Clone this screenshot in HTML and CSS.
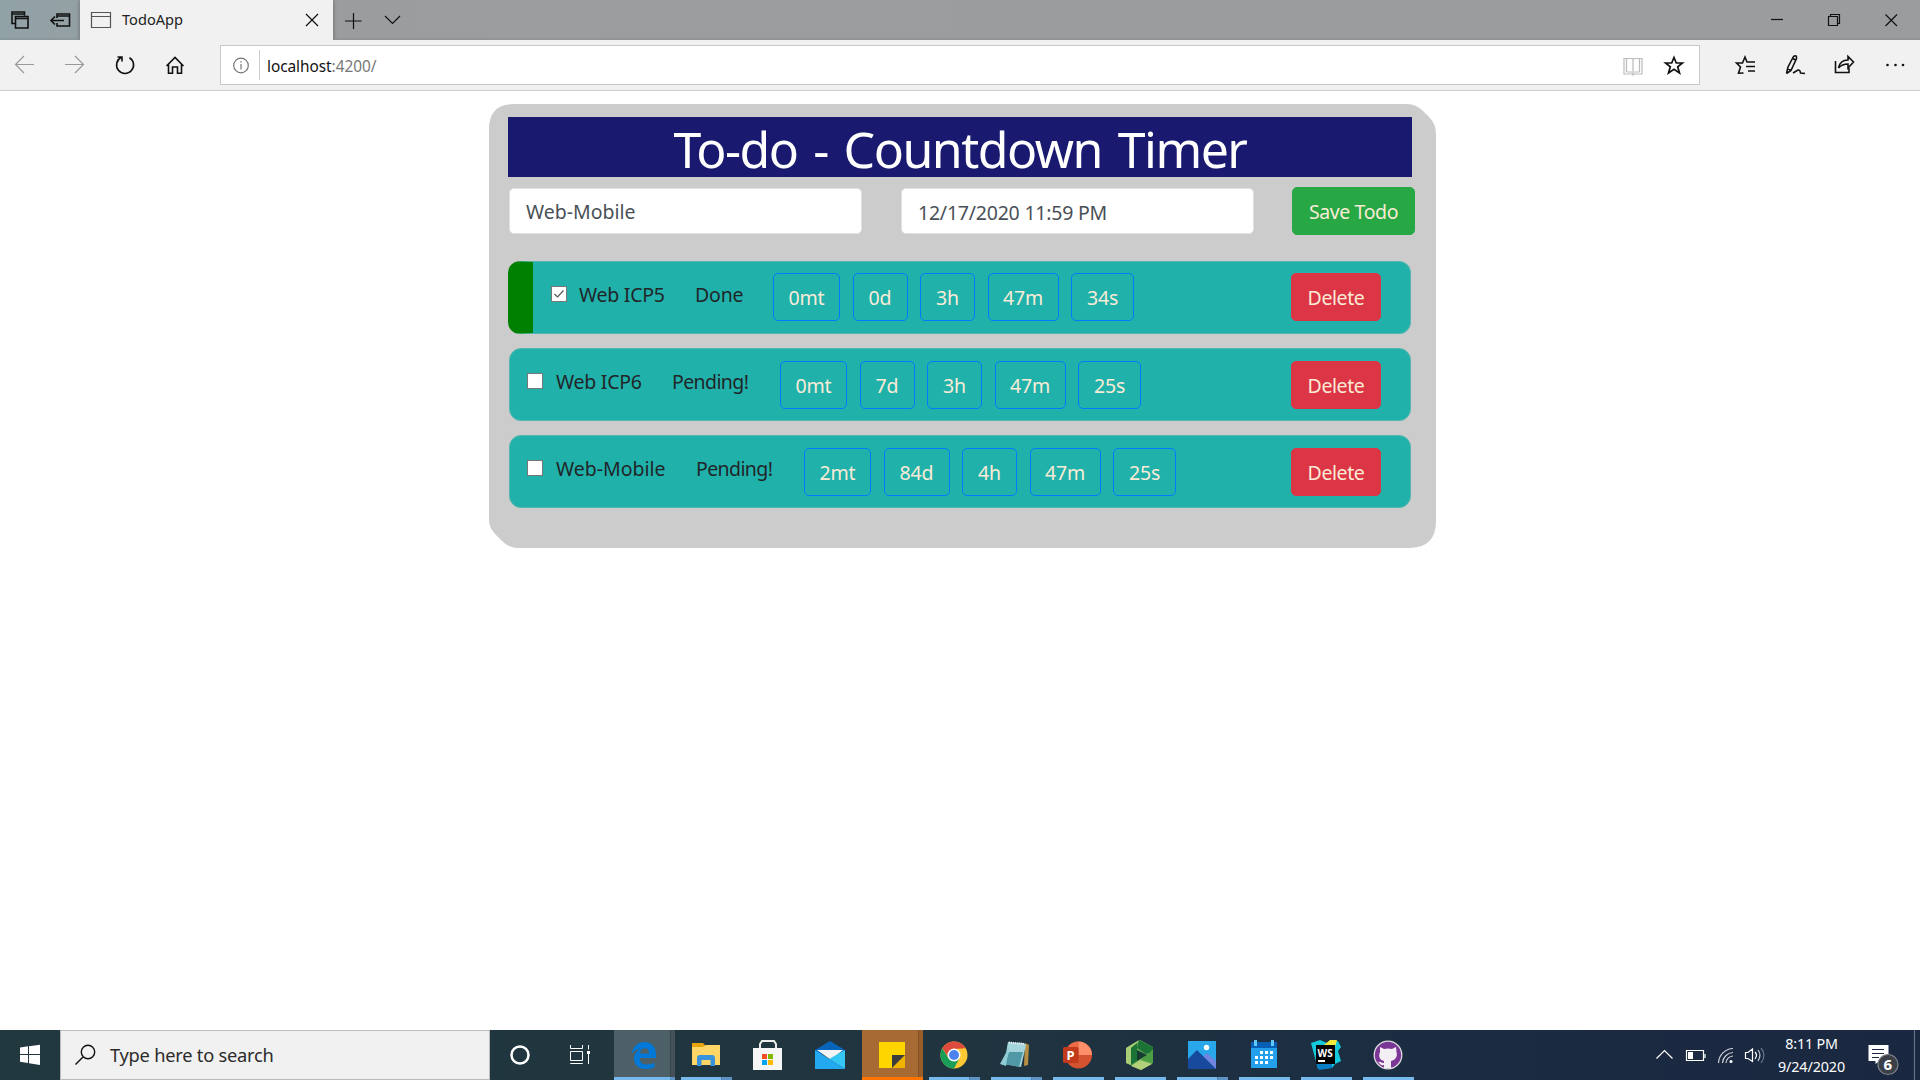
FILE: index.html
```html
<!DOCTYPE html>
<html lang="en">
<head>
<meta charset="utf-8">
<title>TodoApp</title>
<link rel="stylesheet" href="styles.css">
</head>
<body>
<div class="screen">
  <header class="titlebar">
    <div class="cap"><svg width="40" height="40"><path d="M15.500 23.500H12V12H24.500V15.500M12 14H24.500M15.500 16.500H28V28H15.500ZM15.500 18.500H28"/></svg></div>
    <div class="cap"><svg width="40" height="40"><path d="M17 18V14H29.500V26H17V23M17 16H29.500M11 20.500H24M15 16.500L11 20.500L15 24.500"/></svg></div>
    <div class="tab">
      <svg class="page-icon" width="22" height="20"><path d="M1.500 2.500H20.500V17.500H1.500ZM1.500 6.500H20.500"/></svg>
      <span class="tab-title">TodoApp</span>
      <svg class="tab-close" width="14" height="14"><path d="M1 1L13 13M13 1L1 13"/></svg>
    </div>
    <div class="cap thin"><svg width="40" height="40"><path d="M12 21H28.500M20.500 13V29"/></svg></div>
    <div class="cap thin"><svg width="40" height="40"><path d="M12 16L19.500 23.500L27 16"/></svg></div>
    <div class="window-controls">
      <svg width="57" height="40"><path d="M22 19.500H34"/></svg>
      <svg width="57" height="40"><path d="M22.500 16.500H31.500V25.500H22.500ZM24.500 16V14.500H33.500V23.500H32"/></svg>
      <svg width="57" height="40"><path d="M22.500 14.500L34 26M34 14.500L22.500 26"/></svg>
    </div>
  </header>

  <nav class="toolbar">
    <svg class="muted" width="50" height="50"><path d="M34 24.500H16M24 16L15.500 24.500L24 33"/></svg>
    <svg class="muted" width="50" height="50"><path d="M15 24.500H33M25 16L33.500 24.500L25 33"/></svg>
    <svg class="bold" width="50" height="50"><path d="M21 17.500A8.500 8.500 0 1 0 29.500 17.700M17.500 17H22V21.500"/></svg>
    <svg class="bold" width="50" height="50"><path d="M16.500 26L25 17.500L33.500 26M18.500 24.500V33.300H22.500V27H27.500V33.300H31.500V24.500"/></svg>
    <div class="address">
      <svg width="40" height="38" class="info"><circle cx="20" cy="19.500" r="7.300"/><path d="M20 18V23.500M20 15V16.500"/></svg>
      <span class="rule"></span>
      <span class="url">localhost<span class="port">:4200/</span></span>
      <svg class="book" width="50" height="38"><path d="M24 12.500H16V28H24L25 29L26 28H34V12.500H26L25 13.500ZM25 13V29M18.500 12V26M31.500 12V26M18.500 26H24M26 26H31.500"/></svg>
      <svg class="star" width="32" height="38"><path d="M16 11.500L18.300 17H24.400L19.700 20.800L21.500 27L16 23.300L10.500 27L12.300 20.800L7.600 17H13.700Z"/></svg>
    </div>
    <svg class="bold" width="50" height="50"><path d="M23.500 33L18.500 33.200L20.500 27L16.500 23H22.500L25 17L27 22H35M26 26.500H35M28 31H35"/></svg>
    <svg class="bold" width="50" height="50"><path d="M16.500 33.500L18 27L23.500 16.500Q27 14.500 26.500 18.500L21 30.500L16.500 33.500M22 18L25.500 20M17.500 28.500L20.500 30M23 33L28 30Q30 29.500 30.500 33L35 33.500"/></svg>
    <svg class="bold" width="50" height="50"><path d="M15.500 21V32.500H29V28M18.500 28Q20 20 28 20V16.500L33.500 22L28 28V24Q22 24 18.500 28"/></svg>
    <svg class="dots" width="50" height="50"><circle cx="17.500" cy="25" r="1.300"/><circle cx="25.500" cy="25" r="1.300"/><circle cx="33" cy="25" r="1.300"/></svg>
  </nav>

  <main class="viewport">
    <section class="card">
      <h1 class="heading"><span>To-do - Countdown Timer</span></h1>
      <form class="entry">
        <div class="field">Web-Mobile</div>
        <div class="field date">12/17/2020 11:59 PM</div>
        <div class="btn save">Save Todo</div>
      </form>
      <ul class="todos">
        <li class="todo done">
          <svg class="check" width="16" height="16"><path d="M2.500 7L5.500 10L11.500 3.500"/></svg>
          <span class="name">Web ICP5</span><span class="status">Done</span>
          <div class="timers"><b class="btn mt">0mt</b><b class="btn one">0d</b><b class="btn one">3h</b><b class="btn min">47m</b><b class="btn sec">34s</b></div>
          <div class="btn delete">Delete</div>
        </li>
        <li class="todo">
          <svg class="check" width="16" height="16"></svg>
          <span class="name">Web ICP6</span><span class="status pending">Pending!</span>
          <div class="timers"><b class="btn mt">0mt</b><b class="btn one">7d</b><b class="btn one">3h</b><b class="btn min">47m</b><b class="btn sec">25s</b></div>
          <div class="btn delete">Delete</div>
        </li>
        <li class="todo">
          <svg class="check" width="16" height="16"></svg>
          <span class="name long">Web-Mobile</span><span class="status pending">Pending!</span>
          <div class="timers"><b class="btn mt">2mt</b><b class="btn two">84d</b><b class="btn one">4h</b><b class="btn min">47m</b><b class="btn sec">25s</b></div>
          <div class="btn delete">Delete</div>
        </li>
      </ul>
    </section>
  </main>

  <footer class="taskbar">
    <svg class="start" width="60" height="50"><path d="M20 17.500L28 16.300V24H20ZM29 16.200L40 14.700V24H29ZM20 25H28V33L20 31.800ZM29 25H40V35L29 33.300Z"/></svg>
    <div class="search">
      <svg width="49" height="48"><circle cx="27" cy="21" r="6.700"/><path d="M22 26L14.500 33.500"/></svg>
      <span>Type here to search</span>
    </div>
    <svg class="cortana" width="60" height="50"><circle cx="30" cy="25" r="8.500"/></svg>
    <svg class="taskview" width="64" height="50"><path d="M20.500 15V18.500H32.500V15M20.500 21.500H32.500V30.500H20.500ZM20.500 34V33.500H32.500V34M38.500 15V19.500M38.500 24V34"/><path class="knob" d="M37 21H40V24H37Z"/></svg>
    <div class="task active"><svg width="62" height="50"><path fill="#0078d7" d="M17.500 24C19 16.500 24 12 30.500 12C38 12 42 17.500 42 24.500V28H25.500C26 33 29 34.500 33 34.500C36.500 34.500 39 33.500 40.500 32.500V37C38 38.500 35 39 31.500 39C24 39 20 34 20 28.500C20 24 22.500 20.500 27 18.700C22.500 19 19.500 21 17.500 24ZM26 23.500H35C35 20 33.500 18.300 31 18.300C28 18.300 26.300 20.500 26 23.500Z"/></svg></div>
    <div class="task open multi"><svg width="62" height="50"><path fill="#e6a50d" d="M16 13H27L30 16H42V22H16Z"/><path fill="#ffd767" d="M16 17H27L30 15H44V35H16Z"/><path fill="#3993dc" d="M21 36V28Q21 25 24 25H36Q39 25 39 28V36H34.500V30H25.500V36Z"/></svg></div>
    <div class="task"><svg width="62" height="50"><path fill="none" stroke="#eee" stroke-width="2" d="M22 19V14L24 11H36L38 14V19"/><path fill="#f6f6f6" d="M15 18H44V40H15Z"/><path fill="#f25022" d="M24 24H29V29H24Z"/><path fill="#7fba00" d="M30 24H35V29H30Z"/><path fill="#00a4ef" d="M24 30H29V35H24Z"/><path fill="#ffb900" d="M30 30H35V35H30Z"/></svg></div>
    <div class="task"><svg width="62" height="50"><path fill="#0864b8" d="M15 20L30 11L45 20V24H15Z"/><path fill="#f3f3f3" d="M17 20H43L31 30Z"/><path fill="#35c6f5" d="M45 20V39L29 29Z"/><path fill="#23a9ef" d="M15 20L45 39H15Z"/></svg></div>
    <div class="task sticky"><svg width="62" height="50"><path fill="#ffd500" d="M17 12H43V38H17Z"/><path fill="#f0b400" d="M43 25V38H30Z"/><path fill="#3c3c3c" d="M30 25H43L30 38Z"/></svg></div>
    <div class="task open multi"><svg width="62" height="50"><circle cx="30" cy="25" r="13.500" fill="#fcc934"/><path fill="#dc4b3e" d="M18.300 18.250A13.500 13.500 0 0 1 41.700 18.250L30 19L25 28Z"/><path fill="#1a9d58" d="M18.300 18.250A13.500 13.500 0 0 0 30 38.500L35 29H25Z"/><circle cx="30" cy="25" r="6.500" fill="#fff"/><circle cx="30" cy="25" r="5" fill="#4c83ee"/></svg></div>
    <div class="task open multi"><svg width="62" height="50"><path fill="#b69145" d="M39 13L43 15L42 35L38 36Z"/><path fill="#a4d5dc" d="M22 12L38 13L40 15L35 37L18 34Z"/><path fill="#4f98a6" d="M23 22L19 34L33 37L37 22Z"/><path fill="#8ecbd4" d="M23 17L14 34L20 36Z"/><path stroke="#eee" stroke-width="2" stroke-dasharray="1 1" d="M23 12.500L38 14"/></svg></div>
    <div class="task open"><svg width="62" height="50"><circle cx="30.500" cy="25" r="13.500" fill="#d35230"/><path fill="#ed6c47" d="M17 25A13.500 13.500 0 0 1 30.500 11.500V25Z"/><path fill="#ff8f6b" d="M30.500 11.500A13.500 13.500 0 0 1 44 25H30.500Z"/><rect x="15" y="17" width="15.500" height="16" rx="1.500" fill="#c03a1b"/><text class="ppt" x="18.500" y="30">P</text></svg></div>
    <div class="task open"><svg width="62" height="50"><path fill="#6aa955" d="M16 18L30 10L43 17V33L31 40L16 33Z"/><path fill="#a9cd76" d="M16 18L29 10L27 13L21 18V35L16 33Z"/><path fill="#1c7336" d="M27 18L29 10L43 17V22L36 24Z"/><path fill="#4b9e43" d="M43 19V33L31 30L37 25Z"/><path fill="#b2d07a" d="M21 36L30 30L42 34L31 40Z"/><path fill="#1c7336" d="M21 18L27 13V31L21 35Z"/><path fill="#173c32" d="M27 20L37 25L27 31Z"/></svg></div>
    <div class="task open multi"><svg width="62" height="50"><path fill="#28a8ea" d="M16 11H44V39H16Z"/><path fill="#7185df" d="M26 31L35 23L44 31V39H26Z"/><path fill="#174a9c" d="M16 29L25 20L44 39H16Z"/><circle cx="34.500" cy="17.500" r="2.700" fill="#fff"/></svg></div>
    <div class="task open"><svg width="62" height="50"><path fill="#249fec" d="M17 12H43V38H17Z"/><path fill="#075eb5" d="M17 12H43V18H17Z"/><path stroke="#60c8f7" stroke-width="3" d="M21.500 10V16M38.500 10V16"/><path stroke="#fff" stroke-width="3" stroke-dasharray="3 2" d="M26 22.500H39M21 27.500H39M21 32.500H34"/></svg></div>
    <div class="task open"><svg width="62" height="50"><path fill="#15c9dd" d="M15 13L24 10L31 13L42 11L45 17L42 21L45 31L39 34L36 38L22 39Z"/><path fill="#f2eb3d" d="M28 15L34 10H41L39 17Z"/><path fill="#087cc5" d="M20 33H36V38L23 40Z"/><path d="M20 15H39V34H20Z"/><text class="ws" x="21.500" y="26.500">WS</text><path fill="#fff" d="M22 30H29V32H22Z"/></svg></div>
    <div class="task open"><svg width="62" height="50"><circle cx="30" cy="25" r="13.800" fill="#7c3796" stroke="#dedede" stroke-width="1.300"/><path fill="#f3edf4" d="M22 17L26 19Q30 18 34 19L38 17L38.500 22C40 27 37 30 33 31V38H26V35C22 36 22 33 20 32C23 31 23 33 26 33V31C22 30 20 27 22 22Z"/></svg></div>
    <div class="tray">
      <svg width="136" height="50"><path d="M17.500 28.500L25.500 20.500L33.500 28.500M47.500 20.500H64.500V30.500H47.500ZM66 24V28"/><path class="solid" d="M49 22H54V29H49Z"/><path class="thin" d="M79.500 33A15 15 0 0 1 94 18.500M83.500 33A11 11 0 0 1 94 22.500M87 33A7.500 7.500 0 0 1 94 26"/><circle class="solid" cx="92" cy="31.500" r="1.500"/><path d="M106.500 22.500H109L113.500 19V31.500L109 28.500H106.500ZM116 22Q119 25 116 29"/><path class="thin" d="M119 20Q123 25 119 31"/><path class="thin faint" d="M122 18Q128 25 122 33"/></svg>
      <div class="clock"><span class="time">8:11 PM</span><span class="day">9/24/2020</span></div>
      <svg class="notice" width="65" height="50"><path class="solid" d="M13.500 15H33.500V31H24.500L20.500 34V31H13.500Z"/><path class="lines" d="M17 19.500H29M17 23.500H29M17 27.500H24"/><circle cx="33" cy="34.500" r="10" fill="#3b4048" stroke="#7c838c"/><text x="28.500" y="40">6</text><path class="edge" d="M59.500 0V50"/></svg>
    </div>
  </footer>
</div>
</body>
</html>
```
FILE: styles.css
```css
* { box-sizing: border-box; }
body { margin: 0; background: #fff; font-family: "Noto Sans", "Open Sans", sans-serif; color: #212529; }
svg { display: block; flex: none; }
.screen { width: 1920px; height: 1080px; display: flex; flex-direction: column; overflow: hidden; }

.titlebar { display: flex; height: 40px; background: linear-gradient(90deg, #91a2a7 0, #999c9e 240px, #9c9d9e 500px, #9b9c9e); box-shadow: inset 0 -3px 3px -2px #77777766; }
.titlebar svg, .toolbar svg { fill: none; stroke: #111; stroke-width: 1.2; }
.cap { width: 40px; }
.titlebar .cap svg { stroke-width: 1.6; }
.titlebar .thin svg { stroke-width: 1.2; }
.tab { width: 253px; display: flex; align-items: center; background: #f1f1f1; padding: 0 14px 0 10px; box-shadow: 0 0 4px #666; clip-path: inset(0 -4px 0 -4px); }
.tab-title { font-size: 14.6px; margin: -2px 0 0 10px; flex: 1; color: #222; letter-spacing: 0; }
.titlebar .page-icon { stroke: #555; }
.window-controls { display: flex; margin-left: auto; }

.toolbar { height: 51px; flex: none; display: flex; background: #f1f1f1; border-bottom: 1px solid #ccc; }
.toolbar .muted { stroke: #999; }
.toolbar .bold { stroke-width: 1.6; }
.toolbar .dots { fill: #111; stroke: none; }
.address { display: flex; align-items: center; width: 1480px; height: 40px; margin: 5px 20px 0; background: #fff; border: 1px solid #c8c8c8; }
.toolbar .info { stroke: #777; }
.rule { width: 1px; height: 30px; background: #ccc; margin-right: 7px; margin-left: -2px; }
.url { font-size: 15.4px; flex: 1; color: #111; letter-spacing: -.05px; padding-top: 2px; }
.port { color: #777; }
.toolbar .book { stroke: #bbb; }
.toolbar .star { stroke-width: 1.7; margin-right: 9px; }

.viewport { flex: 1; padding-top: 13px; }
.card { width: 947px; height: 444px; margin-left: 489px; padding: 13px 21px 0 19px; background: #ccc; clip-path: path("M25 0H918Q927 0 934 7L940 13Q947 20 947 30V417Q947 444 920 444H28Q20 444 13 437L7 431Q0 424 0 416V25Q0 0 25 0Z"); }
.heading { width: 904px; height: 60px; margin: 0; text-align: center; background: #191970; color: #fff; font-size: 50px; line-height: 65px; font-weight: 400; white-space: nowrap; letter-spacing: -1.5px; word-spacing: 4.2px; }
.entry { display: flex; height: 48px; margin: 10px 0 0; }
.field { width: 353px; height: 46px; margin: 1px 0 0 1px; padding-left: 16px; background: #fff; border: 1px solid #dce2e8; border-radius: 5px; font-size: 19.5px; line-height: 45px; color: #495057; }
.date { margin-left: 39px; line-height: 47px; letter-spacing: -.22px; }
.btn { display: block; height: 48px; border: 1px solid #007bff; border-radius: 5px; font-size: 19.5px; line-height: 48px; font-weight: 400; text-align: center; color: #faebd7; white-space: nowrap; letter-spacing: -.15px; }
.save { width: 123px; margin-left: 38px; background: #28a745; border-color: #28a745; flex: none; letter-spacing: -.4px; line-height: 47px; }
.todos { list-style: none; margin: 26px 0 0; padding: 0; display: grid; gap: 14.5px; width: 903px; }
.todo { display: flex; align-items: flex-start; height: 72.7px; margin-left: 1px; padding: 12px 29px 0 17px; border: 1px solid #55b7b1; border-radius: 12px; background: #20b2aa; font-size: 19.5px; }
.done { margin-left: 0; padding: 11px 29px 0 18px; border-left: 25px solid green; }
.check { margin-top: 12px; background: #fff; border: 1px solid #777; fill: none; stroke: #555; stroke-width: 1.2; }
.done .check { margin-top: 13px; }
.name { width: 85px; margin: 7px 0 0 13px; white-space: nowrap; letter-spacing: -.25px; }
.done .name { margin-left: 12px; margin-top: 8px; }
.long { width: 109px; letter-spacing: 0; }
.status { width: 46px; margin: 7px 0 0 31px; white-space: nowrap; letter-spacing: -.2px; }
.done .status { margin-top: 8px; }
.pending { width: 77px; letter-spacing: -.6px; }
.timers { display: flex; gap: 12.5px; margin-left: 31px; }
.done .timers { margin-left: 32px; }
.mt { width: 67px; }
.one { width: 55px; }
.two { width: 66px; }
.min { width: 71px; }
.sec { width: 63px; }
.delete { width: 90px; margin-left: auto; background: #dc3545; border-color: #dc3545; letter-spacing: -.4px; }

.taskbar { display: flex; height: 50px; background: linear-gradient(90deg, #21383f 0, #20353f 900px, #1b2c42 1450px, #1a2740); }
.start { fill: #fff; }
.search { width: 430px; display: flex; align-items: center; background: #f1f1f1; border: 1px solid #bbb; color: #2b2b2b; font-size: 18.3px; letter-spacing: -.25px; }
.search span { margin-top: -2px; }
.search svg { fill: none; stroke: #111; stroke-width: 1.4; }
.cortana { fill: none; stroke: #fff; stroke-width: 2.5; }
.taskview { fill: none; stroke: #fff; stroke-width: 1; }
.taskview .knob { fill: #fff; stroke: none; }
.task { width: 62px; flex: none; }
.open { background: linear-gradient(#76b9ed, #76b9ed) 5px 47px / 51px 3px no-repeat; }
.multi { background: linear-gradient(90deg, #76b9ed 40px, #466f98 40px, #5f93c5 41px) 5px 47px / 51px 3px no-repeat; }
.active { background: linear-gradient(90deg, #76b9ed 56px, #5f93c5 56px) 0 47px / 61px 3px no-repeat, linear-gradient(90deg, #4d6067 56px, #37474d 56px 57px, #445258 57px) 0 0 / 61px 50px no-repeat; }
.sticky { background: linear-gradient(#ff7300, #ff7300) 0 47px / 61px 3px no-repeat, linear-gradient(90deg, #a86a33 56px, #80502a 56px 57px, #9b5d28 57px) 0 0 / 61px 50px no-repeat; }
.ppt { fill: #fff; font-size: 13px; font-weight: 700; }
.ws { fill: #fff; font-size: 10px; font-weight: 700; }
.tray { display: flex; margin-left: auto; color: #fff; }
.tray svg { fill: none; stroke: #fff; stroke-width: 1.2; }
.tray .thin { stroke: #ccd1d8; }
.tray .faint { stroke: #68748a; }
.tray .solid { fill: #fff; stroke: none; }
.tray .lines { stroke: #1b2a42; }
.tray .edge { stroke: #647083; }
.tray text { fill: #fff; stroke: none; font-size: 15px; font-weight: 700; }
.clock { width: 80px; padding: 2px 7px 0 0; align-items: center; font-size: 14.3px; line-height: 23px; display: flex; flex-direction: column; letter-spacing: -.2px; white-space: nowrap; }
.day { letter-spacing: -.1px; }
```
